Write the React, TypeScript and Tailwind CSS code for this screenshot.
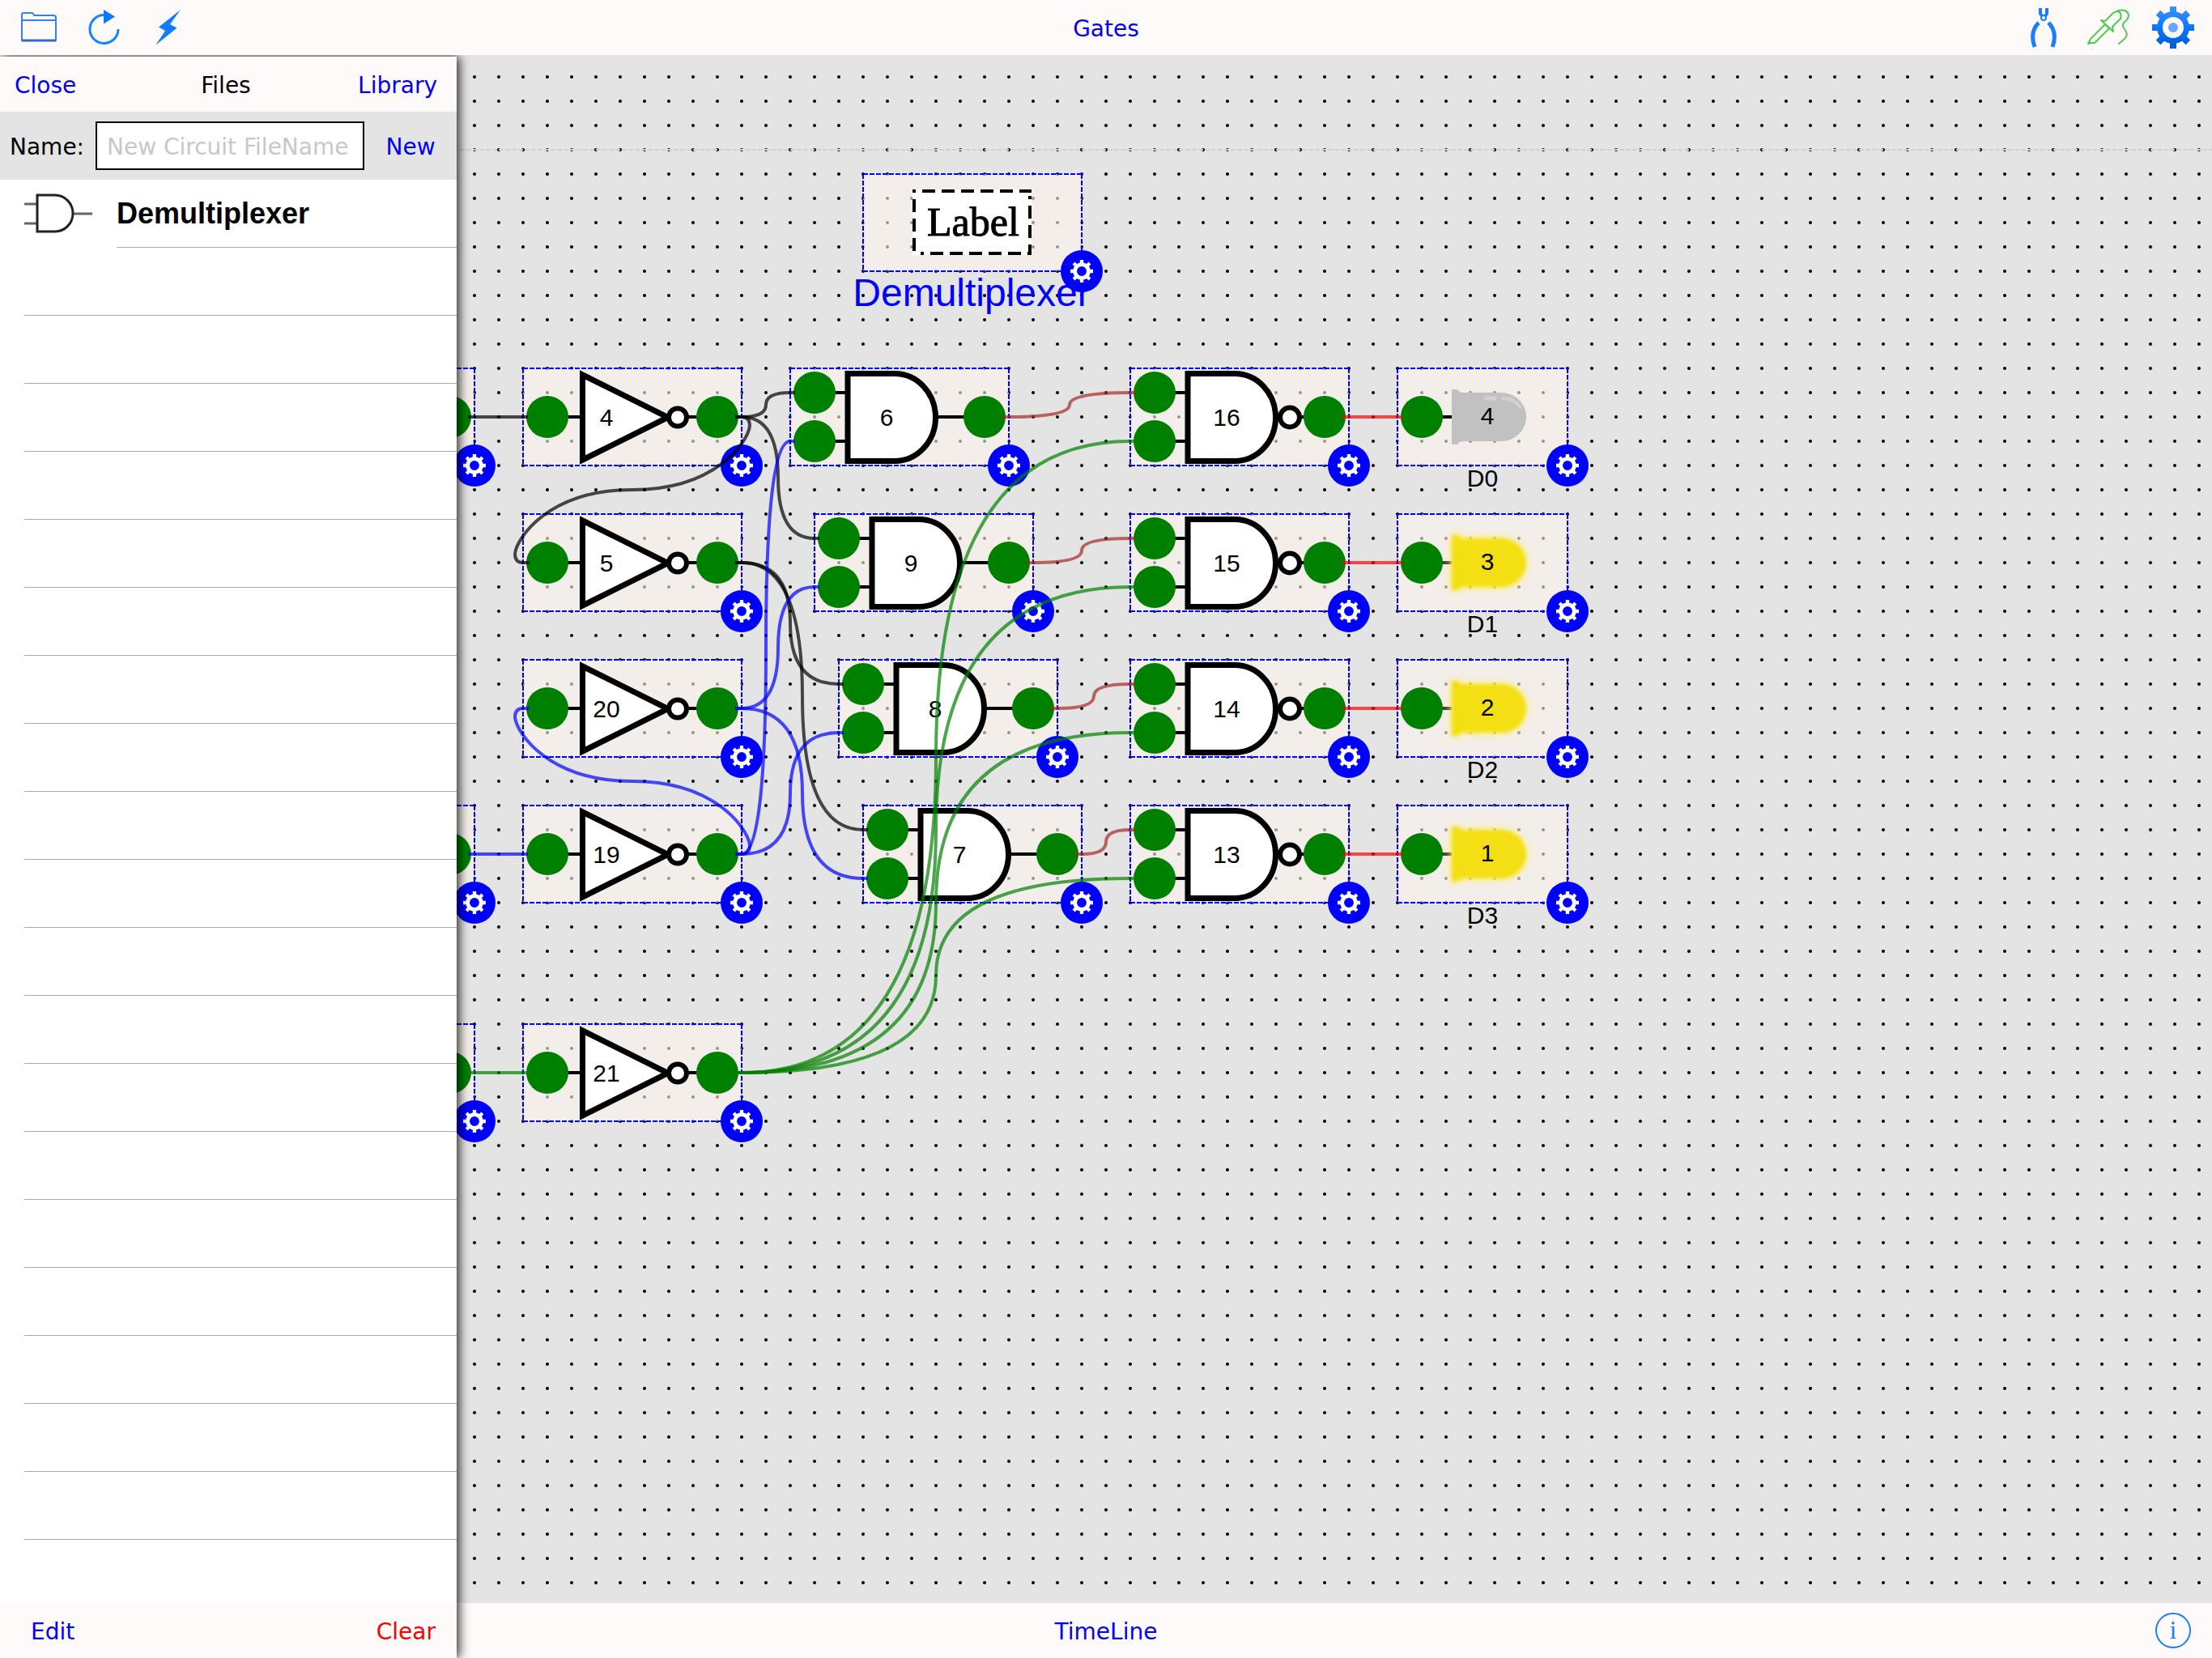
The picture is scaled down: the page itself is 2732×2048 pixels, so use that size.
import { useState } from "react";

type NodeKind = "input" | "not" | "and" | "nand" | "led" | "label";

interface GateNode {
  id: string;
  kind: NodeKind;
  x: number;
  y: number;
  text?: string;
  caption?: string;
  lit?: boolean;
}

interface Wire {
  from: [number, number];
  to: [number, number];
  color: string;
}

const NODES: GateNode[] = [
  { id: "a", kind: "input", x: 316, y: 387 },
  { id: "b", kind: "input", x: 316, y: 927 },
  { id: "c", kind: "input", x: 316, y: 1197 },
  { id: "n4", kind: "not", x: 646, y: 387, text: "4" },
  { id: "n5", kind: "not", x: 646, y: 567, text: "5" },
  { id: "n20", kind: "not", x: 646, y: 747, text: "20" },
  { id: "n19", kind: "not", x: 646, y: 927, text: "19" },
  { id: "n21", kind: "not", x: 646, y: 1197, text: "21" },
  { id: "n6", kind: "and", x: 976, y: 387, text: "6" },
  { id: "n9", kind: "and", x: 1006, y: 567, text: "9" },
  { id: "n8", kind: "and", x: 1036, y: 747, text: "8" },
  { id: "n7", kind: "and", x: 1066, y: 927, text: "7" },
  { id: "n16", kind: "nand", x: 1396, y: 387, text: "16" },
  { id: "n15", kind: "nand", x: 1396, y: 567, text: "15" },
  { id: "n14", kind: "nand", x: 1396, y: 747, text: "14" },
  { id: "n13", kind: "nand", x: 1396, y: 927, text: "13" },
  { id: "led4", kind: "led", x: 1726, y: 387, text: "4", caption: "D0" },
  { id: "led3", kind: "led", x: 1726, y: 567, text: "3", caption: "D1", lit: true },
  { id: "led2", kind: "led", x: 1726, y: 747, text: "2", caption: "D2", lit: true },
  { id: "led1", kind: "led", x: 1726, y: 927, text: "1", caption: "D3", lit: true },
  { id: "label", kind: "label", x: 1066, y: 147, caption: "Demultiplexer" },
];

// from / to are port centers
const WIRES: Wire[] = [
  { from: [556, 447], to: [676, 447], color: "#000000" },
  { from: [556, 987], to: [676, 987], color: "#0000ff" },
  { from: [556, 1257], to: [676, 1257], color: "#008000" },
  { from: [886, 447], to: [1006, 417], color: "#000000" },
  { from: [886, 447], to: [1036, 597], color: "#000000" },
  { from: [886, 447], to: [676, 627], color: "#000000" },
  { from: [886, 627], to: [1066, 777], color: "#000000" },
  { from: [886, 627], to: [1096, 957], color: "#000000" },
  { from: [886, 987], to: [1006, 477], color: "#0000ff" },
  { from: [886, 987], to: [1066, 837], color: "#0000ff" },
  { from: [886, 987], to: [676, 807], color: "#0000ff" },
  { from: [886, 807], to: [1036, 657], color: "#0000ff" },
  { from: [886, 807], to: [1096, 1017], color: "#0000ff" },
  { from: [1216, 447], to: [1426, 417], color: "#a52a2a" },
  { from: [1246, 627], to: [1426, 597], color: "#a52a2a" },
  { from: [1276, 807], to: [1426, 777], color: "#a52a2a" },
  { from: [1306, 987], to: [1426, 957], color: "#a52a2a" },
  { from: [886, 1257], to: [1426, 477], color: "#008000" },
  { from: [886, 1257], to: [1426, 657], color: "#008000" },
  { from: [886, 1257], to: [1426, 837], color: "#008000" },
  { from: [886, 1257], to: [1426, 1017], color: "#008000" },
  { from: [1636, 447], to: [1756, 447], color: "#ff0000" },
  { from: [1636, 627], to: [1756, 627], color: "#ff0000" },
  { from: [1636, 807], to: [1756, 807], color: "#ff0000" },
  { from: [1636, 987], to: [1756, 987], color: "#ff0000" },
];

function wirePath({ from, to }: Wire) {
  const x1 = from[0] + 22;
  const y1 = from[1];
  const x2 = to[0] - 24;
  const y2 = to[1];
  if (y1 === y2) return `M${x1} ${y1}H${x2}`;
  const mx = (from[0] + to[0]) / 2;
  const my = (y1 + y2) / 2;
  if (x2 > x1) {
    return `M${x1} ${y1}H${x1 + 8}Q${mx} ${y1} ${mx} ${my}Q${mx} ${y2} ${x2 - 6} ${y2}H${x2}`;
  }
  // wire that runs back to the left, with a small loop at both ends
  const s = y2 > y1 ? 1 : -1;
  const right = from[0] + 40;
  const left = to[0] - 40;
  return [
    `M${x1} ${y1}H${right - 10}`,
    `Q${right} ${y1} ${right} ${y1 + 11 * s}`,
    `C${right - 2} ${y1 + 30 * s} ${right - 41} ${my} ${mx} ${my}`,
    `C${left + 41} ${my} ${left + 2} ${y2 - 30 * s} ${left} ${y2 - 11 * s}`,
    `Q${left} ${y2} ${left + 10} ${y2}H${to[0] - 22}`,
  ].join("");
}

function gearPath(outer: number, body: number, hole: number, half: number) {
  const base = Math.sqrt(body * body - half * half);
  let d = "";
  for (let i = 0; i < 8; i++) {
    const a = (i * Math.PI) / 4;
    const pt = (r: number, t: number) =>
      `${(26 + r * Math.cos(a) - t * Math.sin(a)).toFixed(2)} ${(26 + r * Math.sin(a) + t * Math.cos(a)).toFixed(2)}`;
    d += i === 0 ? `M${pt(base, -half)}` : `A${body} ${body} 0 0 1 ${pt(base, -half)}`;
    d += `L${pt(outer, -half)}L${pt(outer, half)}L${pt(base, half)}`;
  }
  d += `A${body} ${body} 0 0 1 ${26 + base} ${26 - half}Z`;
  d += `M${26 + hole} 26A${hole} ${hole} 0 1 0 ${26 - hole} 26A${hole} ${hole} 0 1 0 ${26 + hole} 26Z`;
  return d;
}

export default function App() {
  return (
    <div className="relative min-h-screen flex flex-col overflow-hidden bg-[#e4e4e4] font-['DejaVu_Sans',Verdana,sans-serif] text-[28px] leading-8 text-black">
      <TopBar />
      <Canvas />
      <footer className="h-[68px] bg-[#fffafa] grid grid-cols-[1fr_auto_1fr] items-center px-[22px]">
        <span />
        <button type="button" className="pt-1 text-[#0000ff]">TimeLine</button>
        <button type="button" aria-label="Info" className="justify-self-end">
          <InfoIcon />
        </button>
      </footer>
      <FilesPanel />
    </div>
  );
}

function TopBar() {
  return (
    <header className="relative z-20 h-[68px] bg-[#fffafa] grid grid-cols-[1fr_auto_1fr] items-center px-[22px]">
      <div className="flex gap-7">
        <button type="button" aria-label="Files"><FolderIcon /></button>
        <button type="button" aria-label="Reload"><ReloadIcon /></button>
        <button type="button" aria-label="Run"><BoltIcon /></button>
      </div>
      <h1 className="pt-1 text-[#0000ff]">Gates</h1>
      <div className="flex gap-7 justify-end">
        <button type="button" aria-label="Tools"><PliersIcon /></button>
        <button type="button" aria-label="Probe"><ProbeIcon /></button>
        <button type="button" aria-label="Settings"><SettingsIcon /></button>
      </div>
    </header>
  );
}

function FilesPanel() {
  const [name, setName] = useState("");
  const emptyRows = Array.from({ length: 19 }, (_, i) => i);
  return (
    <aside className="absolute z-10 left-0 top-[70px] bottom-0 w-[564px] flex flex-col bg-white shadow-[3px_0_12px_rgba(0,0,0,0.85)]">
      <div className="h-[68px] shrink-0 bg-[#fffafa] grid grid-cols-[1fr_auto_1fr] items-center pt-1 pl-[18px] pr-6">
        <button type="button" className="justify-self-start text-[#0000ff]">Close</button>
        <h2>Files</h2>
        <button type="button" className="justify-self-end text-[#0000ff]">Library</button>
      </div>
      <div className="h-[84px] shrink-0 bg-[#e4e4e4] flex items-center pl-3">
        <label htmlFor="circuit-name" className="w-[106px] pt-1">Name:</label>
        <input
          id="circuit-name"
          value={name}
          onChange={(e) => setName(e.target.value)}
          placeholder="New Circuit FileName"
          className="flex-1 min-w-0 h-[60px] bg-white border-2 border-black pl-3 pt-0.5 placeholder:text-[#c7c7cd]"
        />
        <button type="button" className="w-[114px] pt-1 text-center text-[#0000ff]">New</button>
      </div>
      <ul className="flex-1 overflow-hidden">
        <li className="h-[84px] flex pl-[30px]">
          <span className="w-[114px] flex items-center"><AndThumb /></span>
          <button
            type="button"
            className="flex-1 border-b border-[#a9a9ac] text-left font-['Liberation_Sans',Arial,sans-serif] font-bold text-[36px]"
          >
            Demultiplexer
          </button>
        </li>
        {emptyRows.map((i) => (
          <li key={i} className="h-[84px] ml-[30px] border-b border-[#a9a9ac]" />
        ))}
      </ul>
      <div className="h-[68px] shrink-0 bg-[#fffafa] flex items-center justify-between pt-1 pl-[38px] pr-[26px]">
        <button type="button" className="text-[#0000ff]">Edit</button>
        <button type="button" className="text-[#ff0000]">Clear</button>
      </div>
    </aside>
  );
}

function Canvas() {
  return (
    <main className="relative flex-1 overflow-hidden bg-[#e4e4e4]">
      <svg className="absolute inset-0 w-full h-full" aria-hidden="true">
        <defs>
          <pattern id="dots" x="1" y="12" width="30" height="30" patternUnits="userSpaceOnUse">
            <circle cx="15" cy="15" r="2" />
          </pattern>
        </defs>
        <rect width="100%" height="100%" fill="url(#dots)" />
        <line x1="0" y1="117" x2="100%" y2="117" stroke="#d0d0d0" strokeWidth="2" strokeDasharray="6 2" />
      </svg>
      {NODES.map((n) => (
        <NodeView key={n.id} node={n} />
      ))}
      <svg className="absolute inset-0 w-full h-full pointer-events-none" aria-hidden="true">
        {WIRES.map((w, i) => (
          <path key={i} d={wirePath(w)} fill="none" stroke={w.color} strokeWidth="4" strokeOpacity="0.7" />
        ))}
      </svg>
    </main>
  );
}

function NodeView({ node }: { node: GateNode }) {
  const width = node.kind === "led" ? 210 : 270;
  return (
    <div className="absolute h-[120px]" style={{ left: node.x, top: node.y, width }}>
      <svg
        className="block w-full h-full overflow-visible font-['Liberation_Sans',Arial,sans-serif] text-[30px]"
        textAnchor="middle"
      >
        <rect width={width} height="120" fill="#fff5ee" fillOpacity="0.6" />
        <path
          d={`M0 0H${width}M0 0V120M0 120H${width}M${width} 0V120`}
          stroke="#0000ff"
          strokeWidth="2"
          strokeDasharray="6 2"
        />
        {node.kind === "input" && <Port x={240} y={60} />}
        {node.kind === "not" && <NotGate text={node.text} />}
        {node.kind === "and" && <AndGate text={node.text} />}
        {node.kind === "nand" && <NandGate text={node.text} />}
        {node.kind === "led" && <Led text={node.text} lit={node.lit} />}
        {node.kind === "label" && <LabelBox />}
        {node.kind === "led" && <text x="105" y="146">{node.caption}</text>}
        {node.kind === "label" && (
          <text x="134" y="163" fill="#0000ff" fontSize="48">{node.caption}</text>
        )}
      </svg>
      <button
        type="button"
        aria-label="Node settings"
        className="absolute -right-[26px] -bottom-[26px] size-[52px] rounded-full bg-[#0000ff] flex items-center justify-center"
      >
        <svg width="28" height="28" viewBox="0 0 52 52">
          <path d={gearPath(26, 20, 11, 4)} fill="#ffffff" fillRule="evenodd" />
        </svg>
      </button>
    </div>
  );
}

function Port({ x, y }: { x: number; y: number }) {
  return <circle cx={x} cy={y} r="26" fill="#008000" />;
}

function NotGate({ text }: { text?: string }) {
  return (
    <>
      <path d="M50 60H72M204 60H220" stroke="#000" strokeWidth="4" />
      <path d="M73.5 8V113L179 60.5Z" fill="#fff" stroke="#000" strokeWidth="7" />
      <circle cx="191" cy="60.5" r="11" fill="#fff" stroke="#000" strokeWidth="6" />
      <Port x={30} y={60} />
      <Port x={240} y={60} />
      <text x="103" y="71">{text}</text>
    </>
  );
}

function AndGate({ text }: { text?: string }) {
  return (
    <>
      <path d="M50 30H70M50 90H70M180 60H220" stroke="#000" strokeWidth="4" />
      <path d="M71 6.5H129A50.5 54 0 0 1 129 114.5H71Z" fill="#fff" stroke="#000" strokeWidth="7" />
      <Port x={30} y={30} />
      <Port x={30} y={90} />
      <Port x={240} y={60} />
      <text x="119" y="71">{text}</text>
    </>
  );
}

function NandGate({ text }: { text?: string }) {
  return (
    <>
      <path d="M50 30H70M50 90H70M208 60H220" stroke="#000" strokeWidth="4" />
      <path d="M71 6.5H129A50.5 54 0 0 1 129 114.5H71Z" fill="#fff" stroke="#000" strokeWidth="7" />
      <circle cx="197" cy="60.5" r="12" fill="#fff" stroke="#000" strokeWidth="6" />
      <Port x={30} y={30} />
      <Port x={30} y={90} />
      <Port x={240} y={60} />
      <text x="119" y="71">{text}</text>
    </>
  );
}

function Led({ text, lit }: { text?: string; lit?: boolean }) {
  const shape = "M67 26H74Q77 30 81 30H128A31 30 0 0 1 128 90H81Q77 90 74 94H67Z";
  return (
    <>
      <path d="M50 60H67" stroke={lit ? "#3c3a34" : "#000"} strokeWidth="4" />
      {lit ? (
        <>
          <path d={shape} fill="#fff36b" className="blur-[6px]" />
          <path d={shape} fill="#f4df14" className="blur-[2px]" />
        </>
      ) : (
        <>
          <path d={shape} fill="#c1c1c1" />
          <path d="M109 37H120" stroke="#d2d2d2" strokeWidth="5" strokeLinecap="round" />
          <path d="M130 37C142 38 147 41 151 48" fill="none" stroke="#d2d2d2" strokeWidth="4" strokeLinecap="round" />
        </>
      )}
      <Port x={30} y={60} />
      <text x="111" y="69">{text}</text>
    </>
  );
}

function LabelBox() {
  return (
    <>
      <rect x="61" y="19" width="147" height="81" fill="#fff" />
      <path
        d="M61 21H208M63 19V100M206 27V100M71 98H208"
        stroke="#000"
        strokeWidth="4"
        strokeDasharray="16 8"
        strokeDashoffset="12"
      />
      <text x="136" y="76" fontSize="50" stroke="#000" className="font-['Liberation_Serif',serif]">Label</text>
    </>
  );
}

function AndThumb() {
  return (
    <svg width="84" height="50" viewBox="0 0 84 50" fill="none" stroke="#222">
      <path d="M0 13H16M0 37H16M61 25H84" stroke="#666" strokeWidth="3" />
      <path d="M16 2H38A22 22.5 0 0 1 38 47H16Z" fill="#fff" strokeWidth="3" />
    </svg>
  );
}

function FolderIcon() {
  return (
    <svg width="52" height="52" viewBox="0 0 52 52" fill="none" stroke="#3580f0" strokeWidth="2">
      <path d="M5 42V10Q5 8 7 8H17Q19 8 20 11H44Q47 11 47 14V42Z" strokeLinejoin="round" />
      <path d="M5 17H47" />
      <path d="M5 42H47" stroke="#2f6bd8" strokeWidth="3" />
    </svg>
  );
}

function ReloadIcon() {
  return (
    <svg width="52" height="52" viewBox="0 0 52 52">
      <path d="M44 28A17.5 17.5 0 1 1 27 10.500" fill="none" stroke="#1484ff" strokeWidth="3" />
      <path d="M26 4L40 12.500L26 21.500Z" fill="#0a7aff" />
    </svg>
  );
}

function BoltIcon() {
  return (
    <svg width="52" height="52" viewBox="0 0 52 52">
      <path d="M41 4L14 25.500L22 30L10.500 47.500L36.500 26.500L28 22Z" fill="#0f7dff" />
    </svg>
  );
}

function PliersIcon() {
  return (
    <svg width="52" height="52" viewBox="0 0 52 52" fill="none" stroke="#1a7fff">
      <path d="M20 20C11 29 11 39 15 50M32 20C41 29 41 39 37 50" strokeWidth="5" />
      <path d="M22 2V9L24 12M30 2V9L28 12" strokeWidth="4" />
      <circle cx="26" cy="14" r="3" strokeWidth="2" />
    </svg>
  );
}

function ProbeIcon() {
  return (
    <svg width="52" height="52" viewBox="0 0 52 52" fill="none" stroke="#4ccb4c" strokeWidth="2" strokeLinejoin="round" strokeLinecap="round">
      <path d="M1 46L4 40L22 22L27 27L9 45L4 45Z" />
      <path d="M17 17L32 31L31 25L41 15Q43 8 38 6Q35 6 32 8L22 18Z" />
      <path d="M38 5Q50 3 51 11Q51 15 46 19Q42 23 46 28Q51 34 47 39L39 46" />
    </svg>
  );
}

function SettingsIcon() {
  return (
    <svg width="52" height="52" viewBox="0 0 52 52">
      <defs>
        <linearGradient id="gear-fill" x1="0" y1="0" x2="0" y2="1">
          <stop offset="0" stopColor="#3f92ff" />
          <stop offset="0.5" stopColor="#0a76ff" />
          <stop offset="1" stopColor="#005ad2" />
        </linearGradient>
      </defs>
      <path d={gearPath(26, 20, 13, 4)} fill="url(#gear-fill)" fillRule="evenodd" />
      <circle cx="26" cy="26" r="6" fill="#6ba7fb" />
    </svg>
  );
}

function InfoIcon() {
  return (
    <svg width="52" height="52" viewBox="0 0 52 52">
      <circle cx="26" cy="26" r="21" fill="none" stroke="#1a7fff" strokeWidth="2" />
      <text x="26" y="36" fontSize="32" textAnchor="middle" fill="#1a7fff" className="font-['Liberation_Serif',serif]">i</text>
    </svg>
  );
}
